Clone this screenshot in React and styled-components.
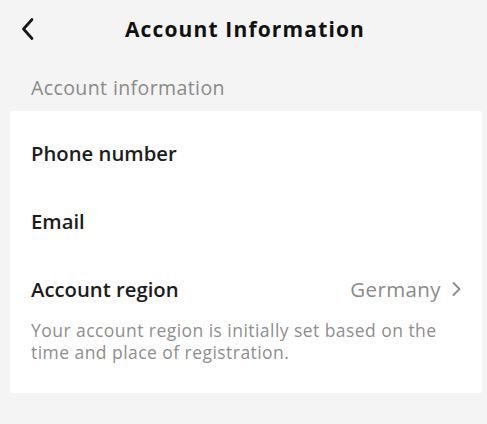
import React from "react";
import styled, { createGlobalStyle } from "styled-components";

const Global = createGlobalStyle`
  html, body { margin: 0; padding: 0; background: #f4f4f4; }
  body { font-family: "Open Sans", "Liberation Sans", sans-serif; -webkit-font-smoothing: antialiased; }
`;

const Page = styled.div`
  width: 487px;
  height: 424px;
  background: #f4f4f4;
  display: flex;
  flex-direction: column;
`;

const Header = styled.div`
  height: 56px;
  display: flex;
  align-items: center;
  position: relative;
  justify-content: center;
`;

const Back = styled.button`
  position: absolute;
  left: 16px;
  top: 15px;
  width: 24px;
  height: 28px;
  border: 0;
  background: none;
  padding: 0;
  display: flex;
  align-items: center;
  justify-content: center;
`;

const Title = styled.h1`
  margin: 2px 0 0 3px;
  font-size: 21px;
  font-weight: 700;
  letter-spacing: 1.15px;
  color: #111;
`;

const SectionLabel = styled.div`
  padding: 20px 31px 11px;
  font-size: 19.5px;
  letter-spacing: 0.4px;
  color: #8a8a8a;
  line-height: 24px;
`;

const Card = styled.div`
  margin: 0 5px 0 10px;
  background: #fff;
  border-radius: 2px;
  padding: 8px 0 30px;
`;

const Row = styled.div`
  height: 68px;
  display: flex;
  align-items: center;
  justify-content: space-between;
  padding: 0 21px 0 21px;
`;

const Label = styled.div`
  font-size: 20.3px;
  font-weight: 600;
  color: #1c1c1c;
`;

const Value = styled.div`
  display: flex;
  align-items: center;
  gap: 11px;
  font-size: 20.5px;
  letter-spacing: 0.4px;
  color: #8a8a8a;
`;

const Note = styled.p`
  margin: -4px 0 0;
  padding: 0 30px 0 21px;
  font-size: 17.5px;
  letter-spacing: 0.45px;
  line-height: 22px;
  color: #8e8e8e;
`;

export default function App() {
  return (
    <Page>
      <Global />
      <Header>
        <Back aria-label="Back">
          <svg width="16" height="24" viewBox="0 0 16 24" fill="none">
            <path d="M12 2.5 L3.5 12 L12 21.5" stroke="#161616" strokeWidth="2.7" strokeLinecap="round" strokeLinejoin="round" />
          </svg>
        </Back>
        <Title>Account Information</Title>
      </Header>
      <SectionLabel>Account information</SectionLabel>
      <Card>
        <Row><Label>Phone number</Label></Row>
        <Row><Label>Email</Label></Row>
        <Row>
          <Label>Account region</Label>
          <Value>
            Germany
            <svg width="9" height="16" viewBox="0 0 9 16" fill="none">
              <path d="M1.5 2 L7.5 8 L1.5 14" stroke="#8a8a8a" strokeWidth="1.8" strokeLinecap="round" strokeLinejoin="round" />
            </svg>
          </Value>
        </Row>
        <Note>Your account region is initially set based on the time and place of registration.</Note>
      </Card>
    </Page>
  );
}
